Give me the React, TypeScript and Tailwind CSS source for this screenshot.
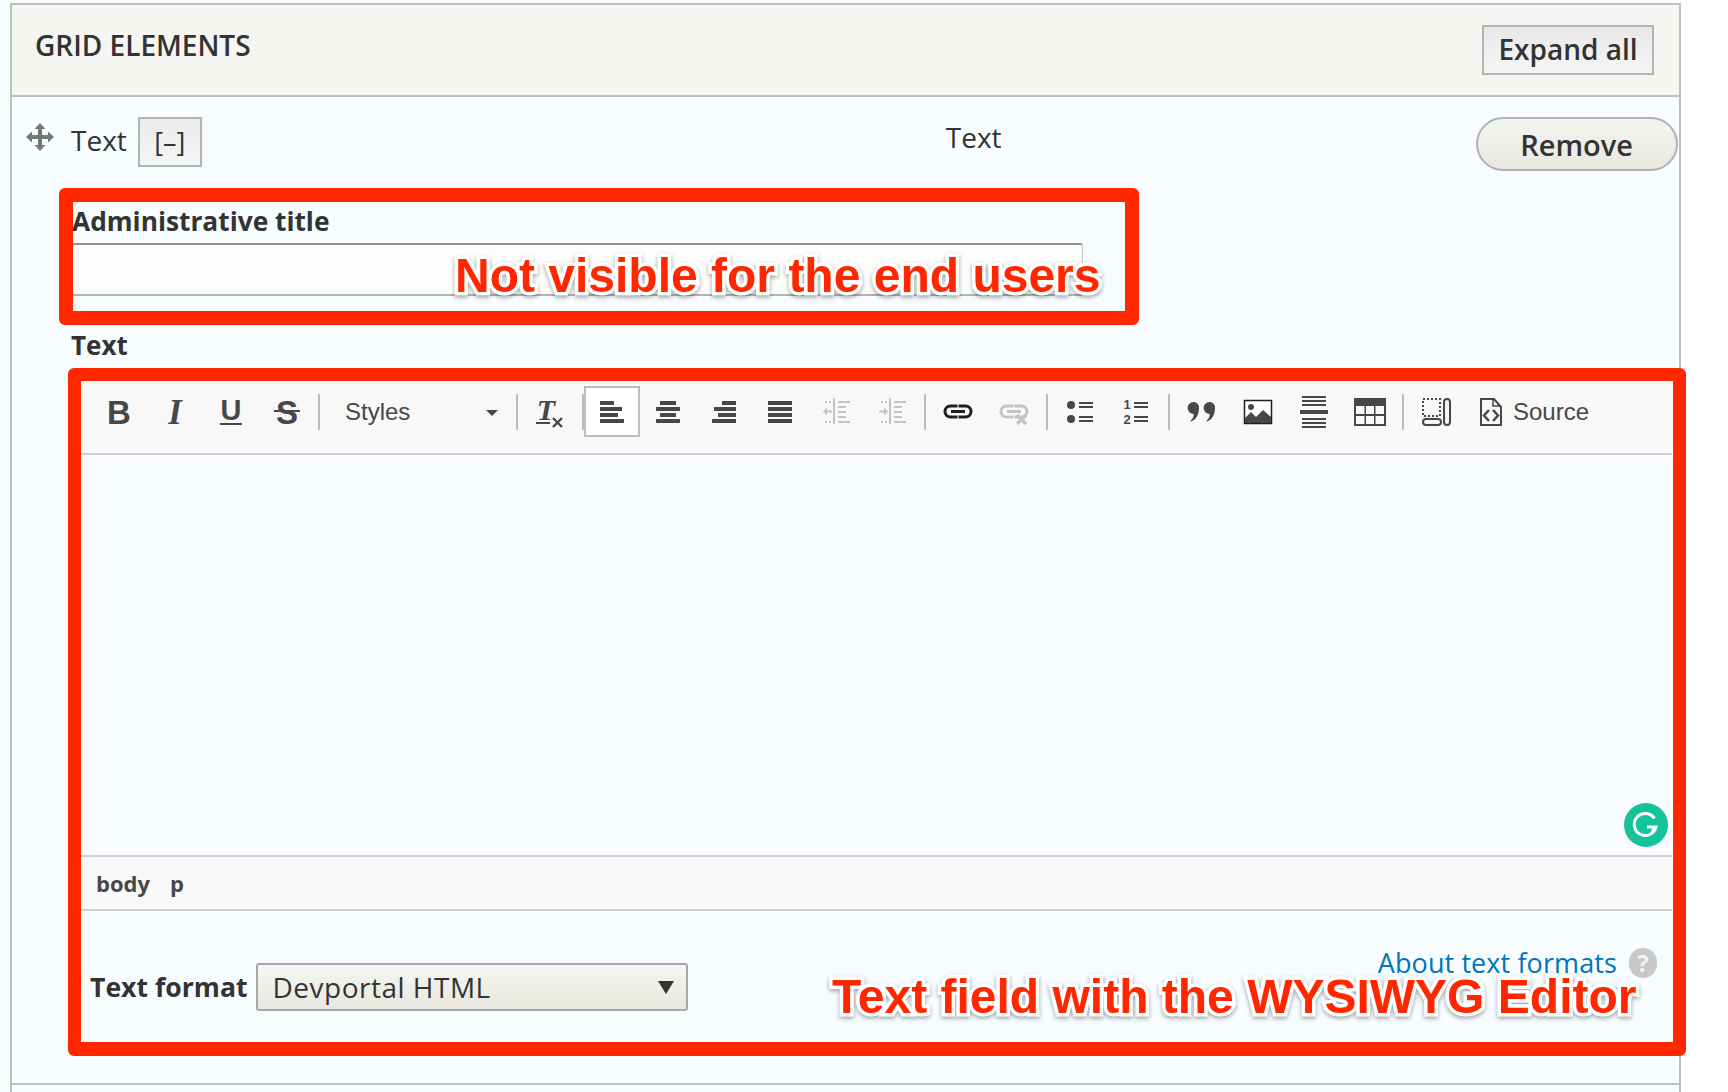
import type { ReactNode } from "react";

const INK = "#474747";
const MUTED = "#c4c4c4";

function Icon({ children }: { children: ReactNode }) {
  return (
    <svg width="32" height="32" viewBox="0 0 32 32" fill={INK} className="overflow-visible">
      {children}
    </svg>
  );
}

function Btn({ children, active }: { children: ReactNode; active?: boolean }) {
  return (
    <div
      className={`flex h-[51px] w-[56px] shrink-0 items-center justify-center ${
        active ? "border-2 border-[#bcbcbc] bg-white" : ""
      }`}
    >
      {children}
    </div>
  );
}

function Sep({ className = "mx-[4px]" }: { className?: string }) {
  return <div className={`h-[36px] w-[2px] shrink-0 bg-[#bcbcbc] ${className}`} />;
}

const SANS = "'Liberation Sans', sans-serif";
const SERIF = "'Liberation Serif', serif";

const BoldIcon = () => (
  <Icon>
    <text x="16" y="28" textAnchor="middle" fontFamily={SANS} fontWeight="700" fontSize="33">B</text>
  </Icon>
);
const ItalicIcon = () => (
  <Icon>
    <text x="16" y="28" textAnchor="middle" fontFamily={SERIF} fontWeight="700" fontStyle="italic" fontSize="35">I</text>
  </Icon>
);
const UnderlineIcon = () => (
  <Icon>
    <text x="16" y="24" textAnchor="middle" fontFamily={SANS} fontWeight="700" fontSize="29">U</text>
    <rect x="5" y="27" width="22" height="2" />
  </Icon>
);
const StrikeIcon = () => (
  <Icon>
    <text x="16" y="28" textAnchor="middle" fontFamily={SANS} fontWeight="700" fontSize="33">S</text>
    <rect x="3" y="14" width="26" height="2" />
  </Icon>
);
const ClearIcon = () => (
  <Icon>
    <text x="12" y="24" textAnchor="middle" fontFamily={SERIF} fontWeight="700" fontStyle="italic" fontSize="30">T</text>
    <rect x="2" y="26" width="14" height="2" />
    <path d="M19 22l9 9M28 22l-9 9" stroke={INK} strokeWidth="2.4" fill="none" />
  </Icon>
);

function Lines({ rows }: { rows: [number, number][] }) {
  return (
    <Icon>
      {rows.map(([x, w], i) => (
        <rect key={i} x={x} y={5 + i * 6} width={w} height="4" />
      ))}
    </Icon>
  );
}

const IndentIcon = ({ flip }: { flip?: boolean }) => (
  <svg width="32" height="32" viewBox="0 0 32 32" fill={MUTED}>
    <rect x="13" y="2" width="2" height="26" />
    <rect x="18" y="5" width="12" height="2" />
    <rect x="18" y="10" width="8" height="2" />
    <rect x="18" y="15" width="8" height="2" />
    <rect x="18" y="20" width="8" height="2" />
    <rect x="18" y="25" width="12" height="2" />
    <rect x="5" y="5" width="2" height="2" />
    <rect x="9" y="5" width="2" height="2" />
    <rect x="5" y="25" width="2" height="2" />
    <rect x="9" y="25" width="2" height="2" />
    {flip ? (
      <path d="M3 14.500h5v-3l4 4-4 4v-3H3z" />
    ) : (
      <path d="M12 14.500H7v-3l-4 4 4 4v-3h5z" />
    )}
  </svg>
);

const LinkIcon = ({ color = "#1f1f1f", cross }: { color?: string; cross?: boolean }) => (
  <svg width="32" height="32" viewBox="0 0 32 32" fill="none" stroke={color} strokeWidth="3">
    <path d="M15.500 10H8.500a5.500 5.500 0 0 0 0 11h7" />
    <path d="M16.500 10h7a5.500 5.500 0 0 1 0 11h-7" />
    <path d="M9 15.500h14" />
    {cross && <path d="M19 19l9 9M28 19l-9 9" strokeWidth="3.400" />}
  </svg>
);

const BulletIcon = () => (
  <Icon>
    <circle cx="7" cy="9" r="4" />
    <circle cx="7" cy="23" r="4" />
    <rect x="15" y="6" width="14" height="2" />
    <rect x="15" y="10" width="14" height="2" />
    <rect x="15" y="20" width="14" height="2" />
    <rect x="15" y="24" width="14" height="2" />
  </Icon>
);

const NumberedIcon = () => (
  <Icon>
    <text x="7" y="13" textAnchor="middle" fontFamily={SANS} fontWeight="700" fontSize="13">1</text>
    <text x="7" y="28" textAnchor="middle" fontFamily={SANS} fontWeight="700" fontSize="13">2</text>
    <rect x="14" y="6" width="14" height="2" />
    <rect x="14" y="10" width="14" height="2" />
    <rect x="14" y="20" width="14" height="2" />
    <rect x="14" y="24" width="14" height="2" />
  </Icon>
);

const QuoteIcon = () => (
  <Icon>
    <path d="M7.500 6a5.500 5.500 0 0 1 5.500 6.500c0 6.500-3.500 11.500-8 13-.7 0-.8-.7-.3-1 2-1.500 3-3.500 3-6.500a6 6 0 0 1-.2-12z" />
    <path d="M23.500 6a5.500 5.500 0 0 1 5.500 6.500c0 6.500-3.500 11.500-8 13-.7 0-.8-.7-.3-1 2-1.500 3-3.500 3-6.500a6 6 0 0 1-.2-12z" />
  </Icon>
);

const ImageIcon = () => (
  <svg width="32" height="32" viewBox="0 0 32 32">
    <rect x="2.500" y="4.500" width="27" height="23" fill="#ffffff" stroke="#1f1f1f" strokeWidth="1.500" />
    <circle cx="9" cy="11" r="3" fill={INK} />
    <path d="M3 27v-5l6-6 5 5 7-7 8 7v6z" fill={INK} />
  </svg>
);

const RuleIcon = () => (
  <Icon>
    <rect x="4" y="0" width="24" height="2" />
    <rect x="4" y="4" width="24" height="2" />
    <rect x="4" y="8" width="24" height="2" />
    <rect x="2" y="14" width="28" height="4" />
    <rect x="4" y="22" width="24" height="2" />
    <rect x="4" y="26" width="24" height="2" />
    <rect x="4" y="30" width="24" height="2" />
  </Icon>
);

const TableIcon = () => (
  <svg width="32" height="32" viewBox="0 0 32 32">
    <rect x="0" y="2" width="32" height="28" fill={INK} />
    <path d="M2 10h8.500v8H2zM12 10h8v8h-8zM21.500 10H30v8h-8.500zM2 20h8.500v8H2zM12 20h8v8h-8zM21.500 20H30v8h-8.500z" fill="#f8f8f8" />
  </svg>
);

const BlocksIcon = () => (
  <svg width="32" height="32" viewBox="0 0 32 32" fill="none" stroke={INK} strokeWidth="2">
    <rect x="3" y="3" width="17" height="17" strokeDasharray="2 2" />
    <rect x="24" y="3" width="6" height="26" rx="3" />
    <rect x="3" y="23" width="18" height="6" rx="3" />
  </svg>
);

const SourceIcon = () => (
  <svg width="24" height="30" viewBox="0 0 24 30" fill="none" stroke={INK} strokeWidth="2">
    <path d="M2 2h13l7 8v18H2z" />
    <path d="M14 2v7h8" strokeWidth="1.500" />
    <path d="M10 13l-5 5.500 5 5.500M14 13l5 5.500-5 5.500" strokeWidth="2.500" />
  </svg>
);

function Toolbar() {
  return (
    <div className="flex h-[73px] items-start border-b-2 border-[#d1d1d1] bg-[#f8f8f8] pl-[10px] pt-[4px] text-[#474747]">
      <Btn><BoldIcon /></Btn>
      <Btn><ItalicIcon /></Btn>
      <Btn><UnderlineIcon /></Btn>
      <Btn><StrikeIcon /></Btn>
      <Sep className="ml-[3px] mt-[8px]" />
      <div className="flex h-[51px] w-[196px] shrink-0 items-center justify-between pl-[25px] pr-[18px] font-['Liberation_Sans',sans-serif] text-[24px]">
        <span>Styles</span>
        <span className="mt-[2px] h-0 w-0 border-x-[6px] border-t-[6px] border-x-transparent border-t-[#474747]" />
      </div>
      <Sep className="mt-[8px] mr-[4px]" />
      <Btn><ClearIcon /></Btn>
      <Sep className="mt-[8px] ml-[4px]" />
      <Btn active><Lines rows={[[4, 14], [4, 22], [4, 18], [4, 24]]} /></Btn>
      <Btn><Lines rows={[[8, 16], [4, 24], [8, 16], [4, 24]]} /></Btn>
      <Btn><Lines rows={[[14, 14], [6, 22], [10, 18], [4, 24]]} /></Btn>
      <Btn><Lines rows={[[4, 24], [4, 24], [4, 24], [4, 24]]} /></Btn>
      <Btn><IndentIcon /></Btn>
      <Btn><IndentIcon flip /></Btn>
      <Sep className="mx-[4px] mt-[8px]" />
      <Btn><LinkIcon /></Btn>
      <Btn><LinkIcon color={MUTED} cross /></Btn>
      <Sep className="mx-[4px] mt-[8px]" />
      <Btn><BulletIcon /></Btn>
      <Btn><NumberedIcon /></Btn>
      <Sep className="mx-[4px] mt-[8px]" />
      <Btn><QuoteIcon /></Btn>
      <Btn><ImageIcon /></Btn>
      <Btn><RuleIcon /></Btn>
      <Btn><TableIcon /></Btn>
      <Sep className="mx-[4px] mt-[8px]" />
      <Btn><BlocksIcon /></Btn>
      <div className="ml-[15px] flex h-[51px] items-center gap-[10px] font-['Liberation_Sans',sans-serif] text-[24px]">
        <SourceIcon />
        <span>Source</span>
      </div>
    </div>
  );
}

function DragIcon() {
  return (
    <svg width="28" height="28" viewBox="0 0 28 28" fill="#777777">
      <rect x="12" y="4" width="4" height="20" />
      <rect x="4" y="12" width="20" height="4" />
      <path d="M14 0l5.500 6h-11zM14 28l-5.500-6h11zM0 14l6-5.500v11zM28 14l-6 5.500v-11z" />
    </svg>
  );
}

function Grammarly() {
  return (
    <div className="absolute right-[4px] top-[348px] flex h-[44px] w-[44px] items-center justify-center rounded-full bg-[#15c39a]">
      <svg width="30" height="30" viewBox="0 0 30 30" fill="none" stroke="#ffffff" strokeWidth="3">
        <path d="M23.500 8.500A11 11 0 1 0 25 17h-9" />
        <path d="M21 22l3-5" strokeWidth="2.500" />
      </svg>
    </div>
  );
}

const ANNOTATION =
  "absolute font-['Liberation_Sans',sans-serif] font-bold whitespace-nowrap text-[#ff2600] text-[48px] leading-none [-webkit-text-stroke:7px_white] [paint-order:stroke_fill] [filter:drop-shadow(0_2px_2px_rgba(0,0,0,0.35))]";

export default function App() {
  return (
    <div className="relative h-[1092px] w-[1728px] overflow-hidden bg-white font-['Open_Sans',sans-serif] text-[#333333]">
      <div className="h-full w-[1681px] bg-[#f7fcff] pl-[10px] pt-[3px]">
        <div className="h-[1089px] border-x-2 border-t-2 border-[#bfc0ba]">
          {/* panel header */}
          <div className="flex h-[92px] items-start justify-between border-b-2 border-[#bfc0ba] bg-[#f5f5f2] pl-[23px] pr-[25px]">
            <h2 className="mt-[22px] text-[28px] font-semibold leading-[36px]">GRID ELEMENTS</h2>
            <button className="mt-[20px] h-[50px] w-[172px] border-2 border-[#b4b4b4] bg-gradient-to-b from-[#e8e8e8] to-[#f6f6f6] pb-[2px] text-[28px] font-semibold">
              Expand all
            </button>
          </div>

          {/* row */}
          <div className="relative h-[988px] border-b-2 border-[#bfc0ba]">
            <div className="flex items-start pt-[20px]">
              <div className="mt-[6px] ml-[14px]"><DragIcon /></div>
              <span className="ml-[17px] mt-[5px] text-[28px] leading-[36px]">Text</span>
              <button className="ml-[11px] h-[50px] w-[64px] border-2 border-[#b4b4b4] bg-gradient-to-b from-[#ebebeb] to-[#f6f6f6] pb-[2px] text-[27px] leading-none">
                [–]
              </button>
              <span className="ml-[744px] mt-[2px] text-[28px] leading-[36px]">Text</span>
              <button className="ml-[474px] h-[54px] w-[202px] rounded-full border-2 border-[#b0b0b0] bg-gradient-to-b from-[#f5f5f0] to-[#e8e8e1] text-[29px] font-semibold leading-none">
                Remove
              </button>
            </div>

            <div className="pl-[60px]">
              <label className="mt-[33px] block text-[26.300px] font-bold leading-[34px]">Administrative title</label>
              <div className="mt-[5px] h-[53px] w-[1011px] rounded-[3px] border-x border-b-2 border-t-2 border-x-[#c6c6c6] border-b-[#b4b4b4] border-t-[#929292] bg-[#fdfdfc]" />
              <label className="mt-[32px] -ml-[1px] block text-[26px] font-bold leading-[34px]">Text</label>

              <div className="relative ml-[9px] mt-[20px] w-[1591px]">
                <Toolbar />
                <div className="relative h-[400px] bg-[#f8fbff]">
                  <Grammarly />
                </div>
                <div className="flex h-[56px] items-center gap-[21px] border-y-2 border-[#d1d1d1] bg-[#f8f8f8] pl-[15px] text-[22px] font-bold text-[#484848]">
                  <span>body</span>
                  <span className="-ml-[1px]">p</span>
                </div>
                <div className="relative flex items-start pl-[9px] pt-[52px]">
                  <span className="mt-[6px] text-[26.600px] font-bold leading-[36px]">Text format</span>
                  <div className="ml-[8px] flex h-[48px] w-[432px] items-center justify-between rounded-[3px] border-2 border-[#a8a8a8] bg-gradient-to-b from-[#f6f6f2] to-[#e8e8e0] pl-[15px] pr-[12px] text-[28px] tracking-[0.5px]">
                    <span>Devportal HTML</span>
                    <span className="h-0 w-0 border-x-[8px] border-t-[13px] border-x-transparent border-t-[#333333]" />
                  </div>
                  <div className="absolute right-[15px] top-[34px] flex items-center gap-[12px]">
                    <a className="text-[27px] leading-[36px] tracking-[0.1px] text-[#0074bd]">About text formats</a>
                    <span className="flex h-[30px] w-[28px] items-center justify-center rounded-full bg-[#c8c8c8] text-[24px] font-bold text-[#f4f4f4]">?</span>
                  </div>
                </div>
              </div>
            </div>
          </div>
        </div>
      </div>

      {/* annotations over the screenshot */}
      <div className="absolute left-[59px] top-[188px] h-[137px] w-[1080px] rounded-[6px] border-[14px] border-[#ff2600]" />
      <div className={`${ANNOTATION} left-[455px] top-[252px]`}>Not visible for the end users</div>
      <div className="absolute left-[68px] top-[368px] h-[688px] w-[1618px] rounded-[6px] border-[13px] border-[#ff2600] border-b-[14px]" />
      <div className={`${ANNOTATION} left-[832px] top-[973px]`}>Text field with the WYSIWYG Editor</div>
    </div>
  );
}
